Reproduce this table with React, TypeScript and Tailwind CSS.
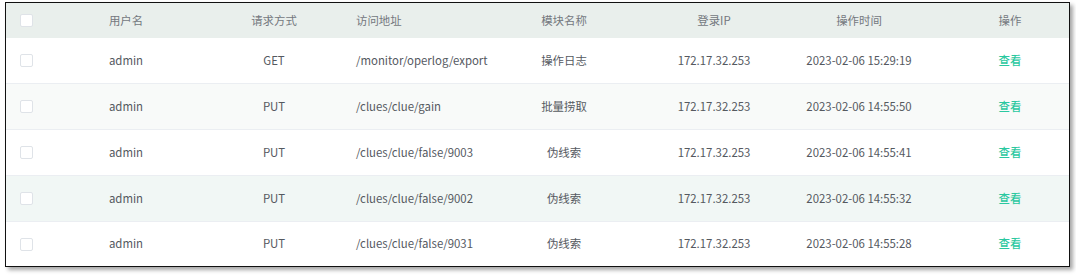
import React from "react";

interface LogRow {
  user: string;
  method: string;
  url: string;
  module: string;
  ip: string;
  time: string;
}

const rows: LogRow[] = [
  { user: "admin", method: "GET", url: "/monitor/operlog/export", module: "操作日志", ip: "172.17.32.253", time: "2023-02-06 15:29:19" },
  { user: "admin", method: "PUT", url: "/clues/clue/gain", module: "批量捞取", ip: "172.17.32.253", time: "2023-02-06 14:55:50" },
  { user: "admin", method: "PUT", url: "/clues/clue/false/9003", module: "伪线索", ip: "172.17.32.253", time: "2023-02-06 14:55:41" },
  { user: "admin", method: "PUT", url: "/clues/clue/false/9002", module: "伪线索", ip: "172.17.32.253", time: "2023-02-06 14:55:32" },
  { user: "admin", method: "PUT", url: "/clues/clue/false/9031", module: "伪线索", ip: "172.17.32.253", time: "2023-02-06 14:55:28" },
];

const cols = "grid grid-cols-[48px_144px_152px_115px_198px_102px_188px_114px] items-center";

const Checkbox = () => (
  <span className="block w-[13px] h-[13px] ml-[14px] rounded-[2px] border border-[#dfe3e8] bg-white" />
);

const rowBg = ["bg-white", "bg-[#f8faf9]", "bg-white", "bg-[#f1f7f5]", "bg-white"];

export default function App() {
  return (
    <div
      className="w-[1076px] h-[277px] bg-white pt-[2px] pl-[5px]"
      style={{ fontFamily: '"Noto Sans CJK SC", "Noto Sans", sans-serif' }}
    >
      <div className="w-[1065px] border-[1.5px] border-[#111] bg-white shadow-[3px_3px_4px_rgba(0,0,0,0.35)] text-[11.4px] text-[#55595f]">
        <div className={`${cols} h-[35px] bg-[#e9efec] text-[#74787e]`}>
          <Checkbox />
          <div className="text-center">用户名</div>
          <div className="text-center">请求方式</div>
          <div className="pl-[6px] whitespace-nowrap">访问地址</div>
          <div className="text-center">模块名称</div>
          <div className="text-center">登录IP</div>
          <div className="text-center">操作时间</div>
          <div className="text-center">操作</div>
        </div>
        {rows.map((r, i) => (
          <div
            key={i}
            className={`${cols} ${i < rows.length - 1 ? "h-[46px] border-b border-[#ebeef2]" : "h-[44px]"} ${rowBg[i]}`}
          >
            <Checkbox />
            <div className="text-center">{r.user}</div>
            <div className="text-center">{r.method}</div>
            <div className="pl-[6px] whitespace-nowrap">{r.url}</div>
            <div className="text-center">{r.module}</div>
            <div className="text-center">{r.ip}</div>
            <div className="text-center whitespace-nowrap">{r.time}</div>
            <div className="text-center">
              <span className="text-[#2bc8a0] font-medium cursor-pointer">查看</span>
            </div>
          </div>
        ))}
      </div>
    </div>
  );
}
